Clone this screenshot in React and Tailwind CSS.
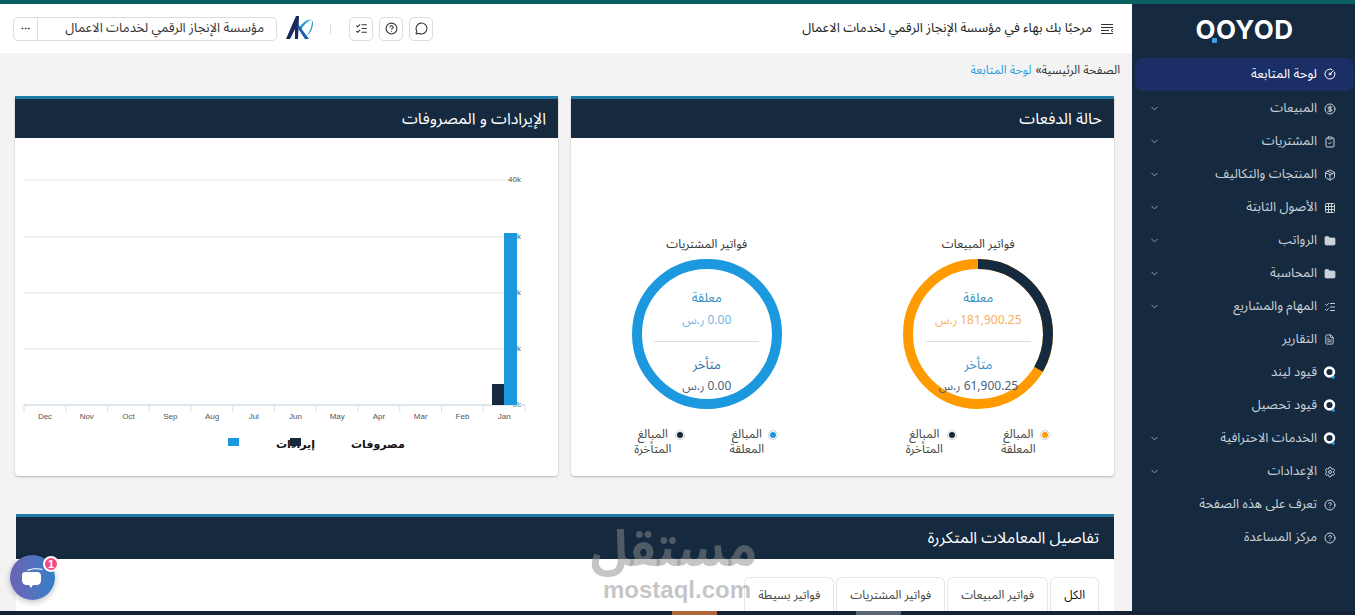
import React from 'react';
import {
  ChevronDown, CircleDollarSign, CircleGauge, CircleHelp, ClipboardCheck, Ellipsis, FileText,
  Folder, Grid3x3, ListChecks, MessageCircle, Package, Settings,
} from 'lucide-react';

const arabic = 'font-["Noto_Sans_Arabic","DejaVu_Sans","Noto_Sans",sans-serif]';

function LogoDot() {
  return (
    <svg width="13" height="13" viewBox="0 0 13 13" className="shrink-0">
      <circle cx="6.5" cy="6" r="4.4" fill="none" stroke="#fff" strokeWidth="2.6" />
      <rect x="9" y="10" width="2.6" height="2.6" fill="#3aa3e3" />
    </svg>
  );
}

function FilledFolder() {
  return <Folder size={12} fill="currentColor" strokeWidth={1.5} />;
}

const navItems = [
  { label: 'لوحة المتابعة', icon: <CircleGauge size={12} />, active: true },
  { label: 'المبيعات', icon: <CircleDollarSign size={12} />, sub: true },
  { label: 'المشتريات', icon: <ClipboardCheck size={12} />, sub: true },
  { label: 'المنتجات والتكاليف', icon: <Package size={12} />, sub: true },
  { label: 'الأصول الثابتة', icon: <Grid3x3 size={12} />, sub: true },
  { label: 'الرواتب', icon: <FilledFolder />, sub: true },
  { label: 'المحاسبة', icon: <FilledFolder />, sub: true },
  { label: 'المهام والمشاريع', icon: <ListChecks size={12} />, sub: true },
  { label: 'التقارير', icon: <FileText size={11} /> },
  { label: 'قيود ليند', icon: <LogoDot /> },
  { label: 'قيود تحصيل', icon: <LogoDot /> },
  { label: 'الخدمات الاحترافية', icon: <LogoDot />, sub: true },
  { label: 'الإعدادات', icon: <Settings size={12} />, sub: true },
  { label: 'تعرف على هذه الصفحة', icon: <CircleHelp size={12} /> },
  { label: 'مركز المساعدة', icon: <CircleHelp size={12} /> },
];

function Sidebar() {
  return (
    <aside className="w-[223px] shrink-0 bg-[#152a3f] text-[#c9d1d9]">
      <div className="h-[52px] flex items-center justify-center pl-[2px]" dir="ltr">
        <div className='relative font-["Inter",sans-serif] font-bold text-[26px] leading-none tracking-[0.5px] text-white'>
          OOYOD
          <span className="absolute left-[17px] top-[21px] w-[5px] h-[5px] bg-[#3aa3e3] rounded-[1px]" />
        </div>
      </div>
      <nav className="pr-px pl-[3px]">
        {navItems.map((item) => (
          <div
            key={item.label}
            className={`h-[33px] flex items-center pr-[18px] pl-[14px] ${item.active ? 'bg-[#1b2f66] rounded-lg text-white h-[30px] my-[1.5px]' : ''}`}
          >
            <span className="w-[13px] flex justify-center shrink-0">{item.icon}</span>
            <span className="mr-[6px] text-[13px] leading-none whitespace-nowrap">{item.label}</span>
            {item.sub && <ChevronDown size={11} className="mr-auto text-[#9aa7b3]" />}
          </div>
        ))}
      </nav>
    </aside>
  );
}

function IconBox({ children }) {
  return (
    <div className="w-[24px] h-[24px] flex items-center justify-center rounded-[5px] border border-[#dcdcdc] text-[#333]">
      {children}
    </div>
  );
}

function Header() {
  return (
    <header className="h-[49px] bg-white flex items-center justify-between pr-[18px] pl-[13px]">
      <div className="flex items-center gap-[8px]">
        <svg width="14" height="12" viewBox="0 0 14 12" fill="none" stroke="#333" strokeWidth="1">
          <path d="M1 1.5h12M1 4.5h12M1 7.5h8M1 10.5h12M13 6l-2 1.5 2 1.5" />
        </svg>
        <span className="text-[13px] text-[#222] whitespace-nowrap">مرحبًا بك بهاء في مؤسسة الإنجاز الرقمي لخدمات الاعمال</span>
      </div>
      <div className="flex items-center">
        <div className="flex items-center gap-[6px]">
          <IconBox><MessageCircle size={13} /></IconBox>
          <IconBox><CircleHelp size={13} /></IconBox>
          <IconBox><ListChecks size={13} /></IconBox>
        </div>
        <div className="w-px h-[10px] bg-[#dddddd] mr-[18px] ml-[-1px]" />
        <svg width="28" height="28" viewBox="0 0 28 28" className="mr-[18px] ml-[8px]">
          <path d="M1 24 L11 1 L14 1 L13 24 L10 24 L10 14 L5 24 Z" fill="#1b2560" />
          <path d="M13 15 C17 7 23 4 27 5 C24 5 19 9 16 15 Z" fill="#1f9ad6" />
          <path d="M13 9 L24 24 L20 24 L12 12 Z" fill="#1b5fa8" />
          <path d="M21 21 C25 17 27 11 27 6 L28 7 C28 13 26 18 21 21 Z" fill="#1f9ad6" />
        </svg>
        <div className="w-[264px] h-[24px] flex items-center rounded-[5px] border border-[#dcdcdc] text-[#333]">
          <span className="flex-1 pr-[12px] text-[13px] whitespace-nowrap">مؤسسة الإنجاز الرقمي لخدمات الاعمال</span>
          <span className="w-[24px] h-full border-r border-[#dcdcdc] flex items-center justify-center">
            <Ellipsis size={11} />
          </span>
        </div>
      </div>
    </header>
  );
}

function CardHead({ title, tall }) {
  return (
    <div className={`border-t-[3px] border-[#1f7ba6] bg-[#152a3f] flex items-center px-[12px] text-white ${tall ? 'h-[45px] px-[15px]' : 'h-[42px]'}`}>
      <h2 className="text-[16px] font-normal leading-none">{title}</h2>
    </div>
  );
}

function Donut({ title, color, dark, pendingValue, lateValue, pendingClass, wrapTop }) {
  const r = 70;
  const c = 2 * Math.PI * r;
  return (
    <div className="flex flex-col items-center">
      <div className="h-[21px] mt-[96px] text-[12px] text-[#333] leading-[21px]">{title}</div>
      <div className="grid w-[150px] h-[150px] mt-[4px] text-center">
        <svg width="150" height="150" viewBox="0 0 150 150" className="col-start-1 row-start-1">
          <circle cx="75" cy="75" r={r} fill="none" stroke={color} strokeWidth="10" />
          {dark > 0 && (
            <circle
              cx="75" cy="75" r={r} fill="none" stroke="#152a3f" strokeWidth="10"
              strokeDasharray={`${c * dark} ${c}`} transform="rotate(-90 75 75)"
            />
          )}
        </svg>
        <div className="col-start-1 row-start-1 flex flex-col items-center pt-[29px]">
          <div className="h-[20px] leading-[20px] text-[13px] text-[#3a8fc4]">معلقة</div>
          <div className={`mt-[5px] w-[105px] text-[12px] leading-[16px] ${pendingClass}`}>{pendingValue}</div>
          <div className="w-[105px] h-px bg-[#dddddd] mt-[12px]" />
          <div className={`h-[20px] leading-[20px] text-[13px] mt-[13px] ${wrapTop ? 'text-[#3a8fc4]' : 'text-[#2f6f9f]'}`}>متأخر</div>
          <div className="mt-[4px] text-[12px] leading-[16px] text-[#4a6580] whitespace-nowrap">{lateValue}</div>
        </div>
      </div>
      <div className="flex mt-[18px] text-[12px] leading-[15px] text-[#444]">
        <LegendDot color={color}>المبالغ<br />المعلقة</LegendDot>
        <LegendDot color="#152a3f">المبالغ<br />المتأخرة</LegendDot>
      </div>
    </div>
  );
}

function LegendDot({ color, children }) {
  return (
    <div className="w-[94px] flex justify-center gap-[4px]">
      <span className="mt-[3px] w-[10px] h-[10px] rounded-full border border-[#cccccc] p-px shrink-0">
        <span className="block w-full h-full rounded-full" style={{ background: color }} />
      </span>
      <span className="text-center -mr-[14px] pr-[14px]">{children}</span>
    </div>
  );
}

const months = ['Dec', 'Nov', 'Oct', 'Sep', 'Aug', 'Jul', 'Jun', 'May', 'Apr', 'Mar', 'Feb', 'Jan'];
const grid = [[180, '40k'], [237, '30k'], [293, '20k'], [349, '10k'], [405, '0k']];

// coordinates are in page pixels minus the chart's origin (15, 138)
function Chart() {
  return (
    <svg width="541" height="338" viewBox="15 138 541 338" className="block" dir="ltr">
      {grid.map(([y, label]) => (
        <g key={label}>
          <line x1="22" x2="515" y1={y} y2={y} stroke="#e6e6e6" strokeWidth="1" />
          <text x="519" y={y + 2} fontSize="8" fill="#555" fontFamily="Liberation Sans, sans-serif">{label}</text>
        </g>
      ))}
      <line x1="22" x2="523" y1="405" y2="405" stroke="#d5e3ec" strokeWidth="1.5" />
      {months.map((m, i) => (
        <g key={m}>
          <line x1={22 + i * 41.75} x2={22 + i * 41.75} y1="405" y2="412" stroke="#d5e3ec" />
          <text x={43 + i * 41.75} y="419" textAnchor="middle" fontSize="8" fill="#555" fontFamily="Liberation Sans, sans-serif">{m}</text>
        </g>
      ))}
      <line x1="523" x2="523" y1="405" y2="412" stroke="#d5e3ec" />
      <rect x="490" y="384" width="12" height="21" fill="#152a3f" />
      <rect x="502" y="233" width="13" height="172" fill="#1c98de" />
      <rect x="226" y="438" width="11" height="8" fill="#1c98de" />
      <text x="274" y="448" textAnchor="end" direction="rtl" fontSize="11" fontWeight="600" fill="#111" fontFamily="DejaVu Sans, sans-serif">إيرادات</text>
      <rect x="288" y="438" width="11" height="8" fill="#152a3f" />
      <text x="349" y="448" textAnchor="end" direction="rtl" fontSize="11" fontWeight="600" fill="#111" fontFamily="DejaVu Sans, sans-serif">مصروفات</text>
    </svg>
  );
}

const tabs = ['الكل', 'فواتير المبيعات', 'فواتير المشتريات', 'فواتير بسيطة'];

export default function App() {
  return (
    <div dir="rtl" className={`relative w-[1355px] h-[615px] overflow-hidden flex flex-col bg-[#f3f3f3] ${arabic}`}>
      <div className="h-[4px] shrink-0 bg-[#0a5f63]" />
      <div className="flex flex-1 min-h-0">
        <Sidebar />
        <main className="flex-1 min-w-0 overflow-hidden">
          <Header />
          <div className="pr-[12px] h-[43px] pt-[10px] text-[12px] leading-[16px] flex items-start gap-[4px]">
            <span className="text-[#333]">الصفحة الرئيسية»</span>
            <span className="text-[#2c9fe0]">لوحة المتابعة</span>
          </div>
          <div className="grid grid-cols-2 gap-[13px] pr-[18px] pl-[15px]">
            <section className="h-[380px] bg-white rounded-b-[4px] shadow-[0_1px_2px_rgba(0,0,0,0.25)] overflow-hidden">
              <CardHead title="حالة الدفعات" />
              <div className="grid grid-cols-2">
                <Donut
                  title="فواتير المبيعات" color="#ff9b00" dark={1 / 3}
                  pendingValue="181,900.25 ر.س" lateValue="61,900.25 ر.س" pendingClass="text-[#f7b25a]" wrapTop
                />
                <Donut
                  title="فواتير المشتريات" color="#1c98de" dark={0}
                  pendingValue="0.00 ر.س" lateValue="0.00 ر.س" pendingClass="text-[#74b6e4]"
                />
              </div>
            </section>
            <section className="h-[380px] bg-white rounded-b-[4px] shadow-[0_1px_2px_rgba(0,0,0,0.25)] overflow-hidden">
              <CardHead title="الإيرادات و المصروفات" />
              <Chart />
            </section>
          </div>
          <section className="mt-[38px] mr-[18px] ml-[16px] bg-white h-[100px]">
            <CardHead title="تفاصيل المعاملات المتكررة" tall />
            <div className="flex gap-[2px] pt-[18px] pr-[15px]">
              {tabs.map((tab, i) => (
                <div
                  key={tab}
                  className={`h-[36px] px-[13px] flex items-center rounded-t-[6px] border border-b-0 border-[#e6e6e6] text-[12px] whitespace-nowrap ${i === 0 ? 'text-[#111]' : 'text-[#444]'}`}
                >
                  {tab}
                </div>
              ))}
            </div>
          </section>
        </main>
      </div>
      <div className="h-[4px] shrink-0 bg-[#152238] flex" dir="ltr">
        <span className="ml-[672px] w-[45px] bg-[#b0683a]" />
        <span className="ml-[139px] w-[45px] bg-[#5a6472]" />
      </div>

      {/* mostaql watermark */}
      <div dir="rtl" className="absolute left-[597px] top-[522px] w-[160px] text-center text-[#8c8c8c]/50 pointer-events-none">
        <div className="text-[50px] font-bold leading-[56px]">مستقل</div>
        <div className='font-["Liberation_Sans",sans-serif] font-bold text-[24px] leading-[24px]' dir="ltr">mostaql.com</div>
      </div>

      {/* chat launcher */}
      <div className="absolute left-[10px] top-[555px] w-[45px] h-[45px] rounded-full bg-gradient-to-r from-[#6a63b5] to-[#2f7fc7] shadow-[0_2px_6px_rgba(0,0,0,0.25)] flex items-center justify-center">
        <svg width="26" height="26" viewBox="0 0 26 26">
          <path d="M7 5 C12 3 18 3 23 4 L22 5 C17 4 12 4 8 6 Z" fill="#fff" />
          <path d="M5 7 H17 C20 7 21 9 21 11 V15 C21 19 19 20 16 20 H13 L11 23 L9 20 H7 C4 20 2 18 2 15 V10 C2 8 3 7 5 7 Z" fill="#fff" />
        </svg>
        <span className='absolute -right-[4px] top-[1px] w-[16px] h-[16px] rounded-full bg-[#f5487f] border-2 border-white text-white text-[11px] font-bold leading-[12px] text-center font-["Liberation_Sans",sans-serif]'>1</span>
      </div>
    </div>
  );
}
